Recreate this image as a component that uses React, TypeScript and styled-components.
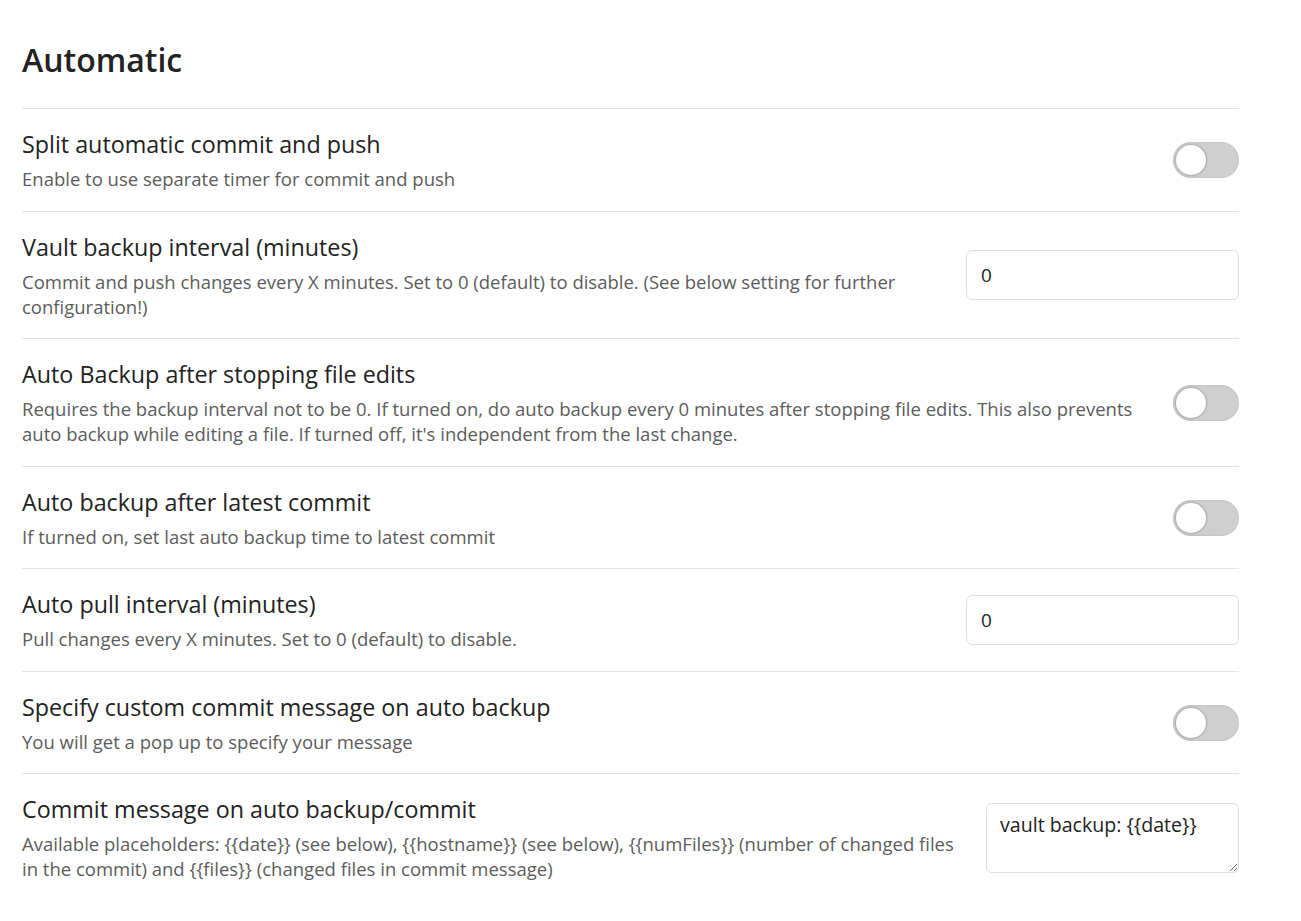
import React from "react";
import styled, { createGlobalStyle } from "styled-components";

const Global = createGlobalStyle`
  html, body { margin: 0; padding: 0; background: #ffffff; }
  body { font-family: "Open Sans", "Noto Sans", sans-serif; color: #222222; }
  * { box-sizing: border-box; }
`;

const Page = styled.div`
  width: 1239px;
  padding: 0 0 0 22px;
`;

const Heading = styled.h2`
  margin: 0;
  padding: 40px 0 28px;
  font-size: 32px;
  line-height: 40px;
  font-weight: 600;
  color: #222222;
`;

const Row = styled.div`
  display: flex;
  align-items: center;
  border-top: 1px solid #e3e3e3;
  padding: 20px 0 19.5px;
`;

const Info = styled.div`
  flex: 1 1 auto;
  margin-right: 30px;
`;

const Name = styled.div`
  font-size: 23.3px;
  line-height: 30px;
  color: #222222;
`;

const Desc = styled.div`
  margin-top: 7px;
  font-size: 18.5px;
  line-height: 25px;
  color: #5c5c5c;
`;

const Control = styled.div`
  flex: 0 0 auto;
  display: flex;
  justify-content: flex-end;
`;

const ToggleTrack = styled.div<{ $on?: boolean }>`
  position: relative;
  width: 66px;
  height: 36px;
  border-radius: 18px;
  background: ${(p) => (p.$on ? "#7f6df2" : "#cfcfcf")};
  box-shadow: inset 0 0 2px rgba(0, 0, 0, 0.15);
`;

const ToggleKnob = styled.div`
  position: absolute;
  top: 3px;
  left: 3px;
  width: 30px;
  height: 30px;
  border-radius: 50%;
  background: #ffffff;
  box-shadow: 0 0 2px 1px rgba(0, 0, 0, 0.18);
`;

const TextInput = styled.input`
  width: 273px;
  height: 50px;
  border: 1px solid #dedede;
  border-radius: 6px;
  padding: 0 14px;
  font-family: inherit;
  font-size: 19px;
  color: #222222;
  background: #ffffff;
  outline: none;
`;

const TextArea = styled.textarea`
  width: 253px;
  height: 70px;
  border: 1px solid #dedede;
  border-radius: 6px;
  padding: 7px 13px;
  font-family: inherit;
  font-size: 19.6px;
  line-height: 27px;
  color: #222222;
  background: #ffffff;
  outline: none;
`;

const Toggle = () => (
  <ToggleTrack>
    <ToggleKnob />
  </ToggleTrack>
);

type Item = {
  name: string;
  desc: string;
  control: "toggle" | "input" | "textarea";
  value?: string;
};

const items: Item[] = [
  {
    name: "Split automatic commit and push",
    desc: "Enable to use separate timer for commit and push",
    control: "toggle",
  },
  {
    name: "Vault backup interval (minutes)",
    desc: "Commit and push changes every X minutes. Set to 0 (default) to disable. (See below setting for further configuration!)",
    control: "input",
    value: "0",
  },
  {
    name: "Auto Backup after stopping file edits",
    desc: "Requires the backup interval not to be 0. If turned on, do auto backup every 0 minutes after stopping file edits. This also prevents auto backup while editing a file. If turned off, it's independent from the last change.",
    control: "toggle",
  },
  {
    name: "Auto backup after latest commit",
    desc: "If turned on, set last auto backup time to latest commit",
    control: "toggle",
  },
  {
    name: "Auto pull interval (minutes)",
    desc: "Pull changes every X minutes. Set to 0 (default) to disable.",
    control: "input",
    value: "0",
  },
  {
    name: "Specify custom commit message on auto backup",
    desc: "You will get a pop up to specify your message",
    control: "toggle",
  },
  {
    name: "Commit message on auto backup/commit",
    desc: "Available placeholders: {{date}} (see below), {{hostname}} (see below), {{numFiles}} (number of changed files in the commit) and {{files}} (changed files in commit message)",
    control: "textarea",
    value: "vault backup: {{date}}",
  },
];

export default function App() {
  return (
    <>
      <Global />
      <Page>
        <Heading>Automatic</Heading>
        {items.map((it) => (
          <Row key={it.name}>
            <Info>
              <Name>{it.name}</Name>
              <Desc>{it.desc}</Desc>
            </Info>
            <Control>
              {it.control === "toggle" && <Toggle />}
              {it.control === "input" && <TextInput type="text" defaultValue={it.value} />}
              {it.control === "textarea" && <TextArea defaultValue={it.value} spellCheck={false} />}
            </Control>
          </Row>
        ))}
      </Page>
    </>
  );
}
